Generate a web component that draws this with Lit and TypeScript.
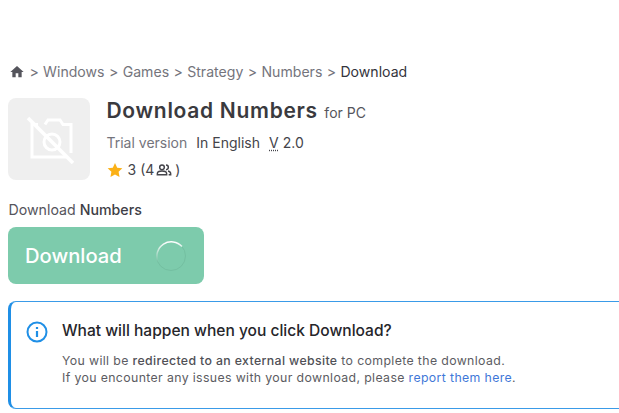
import { LitElement, html, css } from "lit";
import { customElement } from "lit/decorators.js";

@customElement("app-root")
export class AppRoot extends LitElement {
  static styles = css`
    :host { display: block; width: 619px; height: 413px; overflow: hidden; background: #fff; font-family: Inter, "Liberation Sans", sans-serif; color: #3b3b40; }
    .page { padding: 63px 0 0 8px; display: flex; flex-direction: column; }
    .crumbs { display: flex; align-items: center; gap: 4.4px; height: 18px; font-size: 14.1px; line-height: 18px; color: #74747c; }
    .crumbs svg { width: 16px; height: 16px; margin-left: 1px; }
    .crumbs .cur { color: #34343c; }
    .head { display: flex; gap: 16.5px; margin-top: 18px; }
    .thumb { width: 82px; height: 82px; margin-top: -1px; margin-bottom: 1px; border-radius: 8px; background: #efefef; display: flex; align-items: center; justify-content: center; }
    .info { display: flex; flex-direction: column; }
    h1 { margin: 0; height: 24px; font-size: 21px; line-height: 24px; font-weight: 600; letter-spacing: .7px; color: #3a3a3e; display: flex; align-items: baseline; gap: 6.5px; white-space: nowrap; }
    h1 small { font-size: 14px; font-weight: 400; letter-spacing: 0; color: #55555c; }
    .meta { display: flex; align-items: center; gap: 9px; margin-top: 10px; font-size: 14px; line-height: 20px; color: #44444a; }
    .meta .trial { color: #74747c; }
    .meta u { text-decoration: underline dotted; text-underline-offset: 2px; margin-right: 4px; }
    .rate { display: flex; align-items: center; margin-top: 7px; font-size: 14px; line-height: 20px; color: #44444a; }
    .rate .star { margin-right: 5px; }
    .rate .n { margin-left: 4px; }
    .rate .people { margin: 0 3px 0 2px; }
    .label { margin-top: 20px; padding-left: .5px; font-size: 14.2px; line-height: 18px; color: #55555c; }
    .label b { font-weight: 500; color: #3e3e46; }
    .btn { box-sizing: border-box; margin-top: 8px; width: 196px; height: 57px; border-radius: 8px; background: #7dcbac; color: #fff; display: flex; align-items: center; justify-content: space-between; padding: 0 17px 0 17px; font-size: 20.2px; font-weight: 500; }
    .alert { box-sizing: border-box; margin-top: 17px; width: 640px; height: 108px; border: 1px solid #3a9be8; border-left: 3px solid #1f8fe6; border-radius: 8px; padding: 18px 0 0 15px; display: flex; gap: 14px; }
    .alert .ico { width: 22px; height: 22px; flex: none; margin-top: 1px; }
    .title { font-size: 15.55px; line-height: 22px; font-weight: 500; color: #26262b; }
    .body { margin-top: 11px; font-size: 12.3px; line-height: 16.5px; letter-spacing: .37px; color: #5c5c62; }
    .body b { font-weight: 500; color: #505056; }
    .body a { color: #3f78d8; text-decoration: none; }
  `;
  render() {
    return html`<div class="page">
      <div class="crumbs">
        <svg viewBox="0 0 24 24" fill="#55555c"><path d="M10 20v-6h4v6h5v-8h3L12 3 2 12h3v8z"/></svg>
        <span>&gt;</span><span>Windows</span><span>&gt;</span><span>Games</span><span>&gt;</span><span>Strategy</span><span>&gt;</span><span>Numbers</span><span>&gt;</span><span class="cur">Download</span>
      </div>
      <div class="head">
        <div class="thumb">
          <svg width="50" height="50" viewBox="0 0 50 50" fill="none" stroke="#fff" stroke-width="3">
            <path d="M14 10.500H8V43H42M21 10.500l3-4.500h12l3 4.500h8V39"/>
            <circle cx="28" cy="28" r="8"/>
            <path d="M4 4L49 49" stroke-width="3.500"/>
          </svg>
        </div>
        <div class="info">
          <h1>Download Numbers <small>for PC</small></h1>
          <div class="meta"><span class="trial">Trial version</span><span>In English</span><span><u>V</u>2.0</span></div>
          <div class="rate">
            <svg class="star" width="16" height="16" viewBox="0 0 24 24" fill="#fbb117"><path d="M12 1.500l3.300 7 7.700 1-5.600 5.300 1.400 7.700-6.800-3.700-6.800 3.700 1.400-7.700L1 9.500l7.700-1z"/></svg>
            <span>3</span><span class="n">(4</span>
            <svg class="people" width="16" height="16" viewBox="0 0 24 24" fill="none" stroke="#44444a" stroke-width="2.200"><circle cx="9" cy="8" r="3.500"/><path d="M2 19v-1.500c0-2.500 3-4 7-4s7 1.500 7 4V19zM15 4.500a3.500 3.500 0 010 7M18 13.500c2.500.5 4 2 4 4V19h-3"/></svg>
            <span>)</span>
          </div>
        </div>
      </div>
      <div class="label">Download <b>Numbers</b></div>
      <div class="btn"><span>Download</span>
        <svg width="32" height="32" viewBox="0 0 32 32" fill="none">
          <defs><linearGradient id="g" x1="0" y1="0" x2="0" y2="1"><stop offset="0" stop-color="#fff"/><stop offset="1" stop-color="#fff" stop-opacity="0"/></linearGradient></defs>
          <circle cx="16" cy="16" r="14.500" stroke="#74bfa1" stroke-width="1"/>
          <path d="M27 6.500A14.500 14.500 0 003 22" stroke="url(#g)" stroke-width="1.500"/>
        </svg>
      </div>
      <div class="alert">
        <svg class="ico" viewBox="0 0 22 22" fill="none" stroke="#1f8fe6" stroke-width="2"><circle cx="11" cy="11" r="9.500"/><path d="M11 10v6" stroke-width="2.200"/><path d="M11 6v2" stroke-width="2.200"/></svg>
        <div>
          <div class="title">What will happen when you click Download?</div>
          <div class="body">You will be <b>redirected to an external website</b> to complete the download.<br>If you encounter any issues with your download, please <a>report them here</a>.</div>
        </div>
      </div>
    </div>`;
  }
}
